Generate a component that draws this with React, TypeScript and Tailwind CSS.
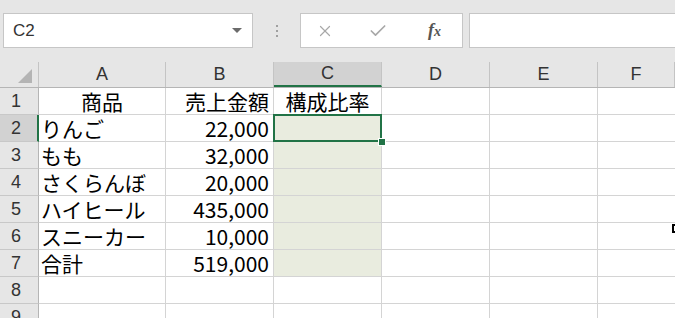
import { Check, X } from 'lucide-react';

const cols = [
  { key: 'A', w: 'w-[127px]' },
  { key: 'B', w: 'w-[108px]' },
  { key: 'C', w: 'w-[108px]' },
  { key: 'D', w: 'w-[108px]' },
  { key: 'E', w: 'w-[108px]' },
  { key: 'F', w: 'flex-1' },
];

const rows: { a: string; b: string; aAlign?: string }[] = [
  { a: '商品', b: '売上金額', aAlign: 'justify-center' },
  { a: 'りんご', b: '22,000' },
  { a: 'もも', b: '32,000' },
  { a: 'さくらんぼ', b: '20,000' },
  { a: 'ハイヒール', b: '435,000' },
  { a: 'スニーカー', b: '10,000' },
  { a: '合計', b: '519,000' },
  { a: '', b: '' },
  { a: '', b: '' },
];

const cellFont = { fontFamily: '"Noto Sans CJK JP", "Liberation Sans", sans-serif' };
const latin = { fontFamily: '"Liberation Sans", sans-serif' };

export default function App() {
  return (
    <div className="w-[675px] h-[318px] overflow-hidden bg-white select-none" style={cellFont}>
      {/* formula bar */}
      <div className="h-[62px] bg-[#e6e6e6] flex items-start pt-[13px] pl-[3px]">
        <div className="w-[250px] h-[35px] bg-white border border-[#c6c6c6] flex items-center pl-[9px] pr-[10px]">
          <span className="text-[17px] text-[#333] flex-1" style={latin}>C2</span>
          <span className="w-0 h-0 border-l-[5px] border-r-[5px] border-t-[5px] border-l-transparent border-r-transparent border-t-[#6b6b6b]" />
        </div>
        <div className="w-[47px] h-[35px] flex flex-col items-center justify-center gap-[3px]">
          <span className="w-[2px] h-[2px] bg-[#a0a0a0]" />
          <span className="w-[2px] h-[2px] bg-[#a0a0a0]" />
          <span className="w-[2px] h-[2px] bg-[#a0a0a0]" />
        </div>
        <div className="w-[163px] h-[35px] bg-white border border-[#c6c6c6] flex items-center pl-[15px]">
          <X className="w-[18px] h-[18px] text-[#a8a8a8]" strokeWidth={1.6} />
          <Check className="w-[20px] h-[20px] text-[#a8a8a8] ml-[34px]" strokeWidth={2} />
          <span
            className="ml-[40px] text-[18px] italic font-bold text-[#555]"
            style={{ fontFamily: '"Liberation Serif", serif' }}
          >
            f<span className="text-[14px]">x</span>
          </span>
        </div>
        <div className="ml-[6px] flex-1 h-[35px] bg-white border border-[#c6c6c6] border-r-0" />
      </div>

      {/* column headers */}
      <div className="flex h-[26px] bg-[#e6e6e6] border-b border-[#b5b5b5]" style={latin}>
        <div className="w-[39px] border-r border-[#c4c4c4] flex items-end justify-end pr-[6px] pb-[4px]">
          <span className="w-0 h-0 border-b-[14px] border-l-[14px] border-l-transparent border-b-[#b4b4b4]" />
        </div>
        {cols.map((c) => (
          <div
            key={c.key}
            className={`${c.w} flex items-center justify-center text-[18px] text-[#333] border-r border-[#c4c4c4] ${
              c.key === 'C' ? 'bg-[#d2d2d2] border-b-2 border-b-[#217346]' : ''
            }`}
          >
            {c.key}
          </div>
        ))}
      </div>

      {/* rows */}
      {rows.map((r, i) => {
        const n = i + 1;
        const active = n === 2;
        const inSel = n >= 2 && n <= 7;
        return (
          <div key={n} className="flex h-[27px] leading-[24px]">
            <div
              className={`w-[39px] flex items-center pl-[11px] text-[18px] text-[#333] border-b border-[#c8c8c8] ${
                active ? 'bg-[#d2d2d2] border-r-2 border-r-[#217346]' : 'bg-[#e6e6e6] border-r border-r-[#b5b5b5]'
              }`}
              style={latin}
            >
              {n}
            </div>
            <div
              className={`w-[127px] flex items-center ${r.aAlign ?? 'justify-start pl-[2px]'} text-[21px] text-black border-r border-b border-[#d4d4d4]`}
            >
              {r.a}
            </div>
            <div className="w-[108px] flex items-center justify-end pr-[4px] text-[21px] text-black border-r border-b border-[#d4d4d4]">
              {r.b}
            </div>
            <div
              className={`relative w-[108px] flex items-center justify-center text-[21px] text-black border-r border-b border-[#d4d4d4] ${
                inSel ? 'bg-[#e9ecdf]' : ''
              }`}
            >
              {n === 1 ? '構成比率' : ''}
              {active && (
                <>
                  <div className="absolute z-10 -left-[1px] -top-[1px] -right-[1px] -bottom-[1px] border-2 border-[#217346]" />
                  <div className="absolute z-20 -right-[5px] -bottom-[5px] w-[8px] h-[8px] bg-[#217346] border border-white" />
                </>
              )}
            </div>
            <div className="w-[108px] border-r border-b border-[#d4d4d4]" />
            <div className="w-[108px] border-r border-b border-[#d4d4d4]" />
            <div className="relative flex-1 border-b border-[#d4d4d4]">
              {n === 6 && <div className="absolute right-0 top-[1px] w-[3px] h-[9px] border-2 border-r-0 border-black" />}
            </div>
          </div>
        );
      })}
    </div>
  );
}
